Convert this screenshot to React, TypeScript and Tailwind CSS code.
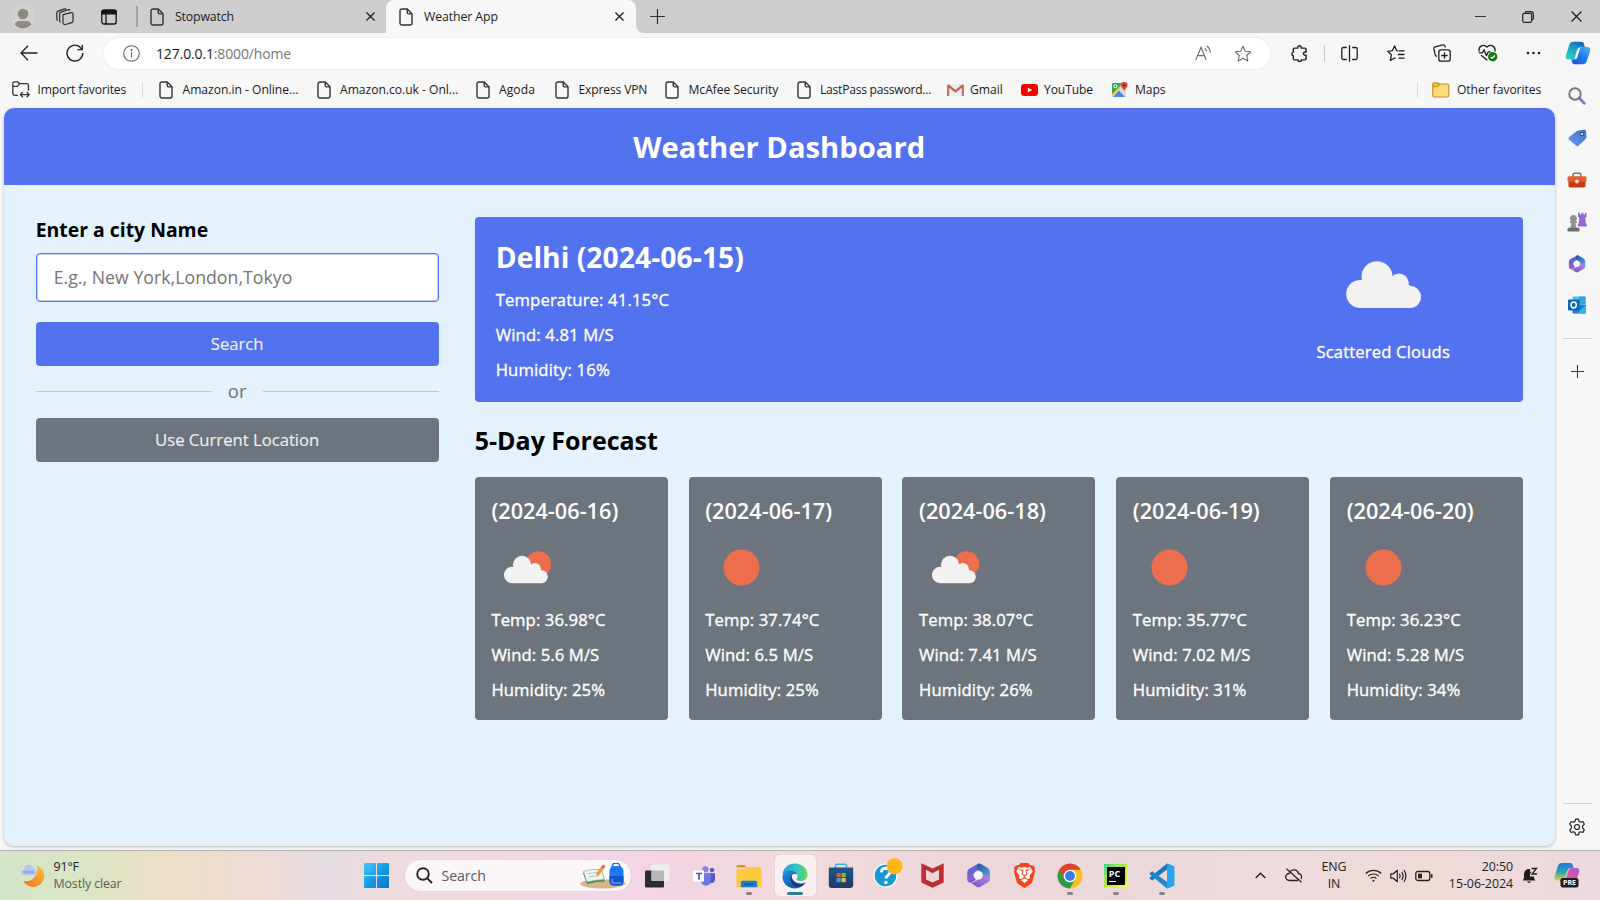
import React from "react";
import { SiBrave } from "react-icons/si";

type P = { className?: string };

/* ---------- browser icons ---------- */
const Doc = ({ className = "" }: P) => (
  <svg className={className} width="14" height="18" viewBox="0 0 14 18" fill="none" stroke="#333" strokeWidth="1.4">
    <path d="M3 1h5.2L13 5.8V15a2 2 0 0 1-2 2H3a2 2 0 0 1-2-2V3a2 2 0 0 1 2-2Z" />
    <path d="M8.2 1v3.6c0 .8.5 1.3 1.3 1.3H13" />
  </svg>
);
const Cross = ({ s = 9, w = 1.4 }: { s?: number; w?: number }) => (
  <svg width={s} height={s} viewBox="0 0 10 10" stroke="#1b1b1b" strokeWidth={w} fill="none">
    <path d="M.5.5l9 9M9.5.5l-9 9" />
  </svg>
);
const Plus = ({ s = 15 }: { s?: number }) => (
  <svg width={s} height={s} viewBox="0 0 15 15" stroke="#333" strokeWidth="1.2" fill="none">
    <path d="M7.5 0v15M0 7.5h15" />
  </svg>
);
const Avatar = () => (
  <svg width="24" height="24" viewBox="0 0 24 24">
    <circle cx="12" cy="12" r="11.6" fill="#d5d2ce" />
    <circle cx="12" cy="9" r="5.3" fill="#8d8985" />
    <path d="M3.8 19.6C4.4 16.8 6.4 16 8.500 16h7c2.100 0 4.100.8 4.700 3.600A11.300 11.300 0 0 1 12 23.300a11.300 11.300 0 0 1-8.200-3.700Z" fill="#8d8985" />
  </svg>
);
const Workspaces = () => (
  <svg width="18" height="18" viewBox="0 0 18 18" fill="none" stroke="#2b2b2b" strokeWidth="1.200" strokeLinejoin="round">
    <path d="M7 6.600l8-2c1-.2 2 .4 2 1.400v7c0 .8-.5 1.400-1.200 1.600l-6.300 1.900C8.200 16.900 7 16.200 7 15V6.600Z" />
    <path d="M4.600 14.200c-.7-.1-1-.7-1-1.400V6c0-1 .5-1.600 1.300-1.900l7.300-2.400c.7-.2 1.500 0 1.800.8" />
    <path d="M1.900 12.300c-.7-.1-1.100-.7-1.100-1.400V5c0-1 .5-1.600 1.300-1.900L8.500.9c.8-.3 1.500 0 1.800.7" />
  </svg>
);
const TabActions = () => (
  <svg width="16" height="16" viewBox="0 0 16 16" fill="none" stroke="#111" strokeWidth="1.300">
    <rect x=".8" y="1" width="14.400" height="14" rx="2.200" />
    <path d="M1 1.800h14v3H1z" fill="#111" />
    <path d="M5 5v10" />
  </svg>
);
const Back = () => (
  <svg width="18" height="16" viewBox="0 0 18 16" fill="none" stroke="#222" strokeWidth="1.300">
    <path d="M8 .8L1 8l7 7.200M1 8h16.500" />
  </svg>
);
const Refresh = () => (
  <svg width="18" height="18" viewBox="0 0 18 18" fill="none" stroke="#222" strokeWidth="1.400">
    <path d="M16.800 9A7.900 7.900 0 1 1 13.800 2.900L16 5.400" />
    <path d="M16.300.8v4.800h-4.800" />
  </svg>
);
const Info = () => (
  <svg width="17" height="17" viewBox="0 0 17 17" fill="none" stroke="#666" strokeWidth="1.100">
    <circle cx="8.500" cy="8.500" r="7.800" />
    <path d="M8.500 7.300v5" />
    <circle cx="8.500" cy="5.100" r=".5" fill="#666" />
  </svg>
);
const ReadAloud = () => (
  <svg width="17" height="16" viewBox="0 0 17 16" fill="none" stroke="#6b6b6b" strokeWidth="1.100">
    <path d="M.8 15L6 2.300 11.200 15M2.600 10.600h6.800" />
    <path d="M9.800 3.200c1 .8 1.500 1.900 1.600 3.200M11.800 1c2.200 1.500 3.400 4 3.500 6.800" />
  </svg>
);
const starPath = "M9 1.200l2.300 5 5.400.6-4 3.700 1.100 5.400L9 13.200l-4.800 2.700 1.100-5.400-4-3.700 5.400-.6L9 1.200Z";
const Star = () => (
  <svg width="18" height="17" viewBox="0 0 18 17" fill="none" stroke="#6b6b6b" strokeWidth="1.100" strokeLinejoin="round">
    <path d={starPath} />
  </svg>
);
const Puzzle = () => (
  <svg width="17" height="17" viewBox="0 0 17 17" fill="none" stroke="#1f1f1f" strokeWidth="1.400" strokeLinejoin="round">
    <path d="M3.300 3.200H6.600C6.200 1.800 7 .8 8.200.8s2 1 1.600 2.400h3.600c.8 0 1.400.5 1.400 1.300v2.700c-1.500-.4-2.700.4-2.700 1.500s1.200 2 2.700 1.500v3.400c0 .8-.6 1.400-1.400 1.400H10c.3 1-.6 1.700-1.600 1.700S6.500 16 6.800 15H3.300c-.8 0-1.300-.6-1.300-1.400v-2.800C.9 10.700.7 9.700.7 9s.4-1.700 1.300-1.800V4.500c0-.8.500-1.300 1.300-1.300Z" transform="translate(.3 -.1)" />
  </svg>
);
const Split = () => (
  <svg width="17" height="17" viewBox="0 0 17 17" fill="none" stroke="#1f1f1f" strokeWidth="1.300">
    <path d="M5.800 2.500H2.500C1.500 2.500.8 3 .8 4v9c0 1 .7 1.500 1.700 1.500h3.300M11.200 2.500h3.300c1 0 1.700.5 1.700 1.500v9c0 1-.7 1.500-1.700 1.500h-3.300M8.500.3v16.400" />
  </svg>
);
const FavList = () => (
  <svg width="18" height="17" viewBox="0 0 18 17" fill="none" stroke="#1f1f1f" strokeWidth="1.300" strokeLinejoin="round">
    <path d="M11 5.800L9.700 5.600 7.600.9 5.500 5.600.8 6.300l3.500 3.500-.9 5.600L7.600 13l1.100.5M11.600 5.800h5.900M10.800 9.500h6.700M11.600 13.200h5.900" />
  </svg>
);
const Collections = () => (
  <svg width="18" height="18" viewBox="0 0 18 18" fill="none" stroke="#1f1f1f" strokeWidth="1.300" strokeLinejoin="round">
    <rect x="5.800" y="5.800" width="11.400" height="11.400" rx="2.200" />
    <path d="M11.500 8.300v6.400M8.300 11.500h6.400" />
    <path d="M3.800 12.300c-.9-.1-1.300-.8-1.600-1.600L.9 5c-.2-1 .3-1.900 1.300-2.200L9.800.9c1-.2 1.900.3 2.200 1.200l.4 1.400" />
  </svg>
);
const Heart = () => (
  <svg width="20" height="18" viewBox="0 0 20 18" fill="none" stroke="#1f1f1f" strokeWidth="1.300" strokeLinejoin="round">
    <path d="M16.900 7.500c.5-2.400-.5-5-3-5.900C12 .9 10.300 1.600 9 3.200 7.700 1.600 6 .9 4.100 1.600 1.600 2.500.6 5.100 1.200 7.600M3 11.200l6.300 5" />
    <path d="M.8 8.800h3.600L6 5.700l2.400 6 1.800-3.800h2.400" />
    <circle cx="14.700" cy="12.800" r="4.700" fill="#117b12" stroke="none" />
    <path d="M12.600 12.900l1.500 1.500 2.800-2.900" stroke="#fff" />
  </svg>
);
const Dots = () => (
  <svg width="15" height="4" viewBox="0 0 15 4" fill="#222">
    <circle cx="2" cy="2" r="1.300" /><circle cx="7.500" cy="2" r="1.300" /><circle cx="13" cy="2" r="1.300" />
  </svg>
);
const Copilot = () => (
  <svg width="26" height="24" viewBox="0 0 26 24">
    <defs>
      <linearGradient id="cpA" x1=".7" y1="0" x2=".2" y2="1"><stop offset="0" stopColor="#1565b8" /><stop offset=".45" stopColor="#1aa7c4" /><stop offset="1" stopColor="#35d0c8" /></linearGradient>
      <linearGradient id="cpB" x1="1" y1="0" x2="0" y2="1"><stop offset="0" stopColor="#4bb7f4" /><stop offset=".5" stopColor="#1c7be8" /><stop offset="1" stopColor="#1f4fd0" /></linearGradient>
    </defs>
    <path d="M8.500.8H16c1.600 0 2.600.8 3 2.300l.8 3H17c-2 0-3.200 1-3.800 2.900l-2.300 7.300c-.5 1.500-1.500 2.300-3 2.300H3.500C1.200 18.600.2 17 .9 14.500L4.200 4C4.900 1.900 6.300.8 8.500.8Z" fill="url(#cpA)" />
    <path d="M17.500 23.200H10c-1.600 0-2.600-.8-3-2.300l-.7-2.300h2.500c1.700 0 2.800-1 3.300-2.700L14.400 8.500c.5-1.600 1.600-2.400 3.300-2.400h4.800c2.300 0 3.300 1.700 2.600 4.100L21.800 20c-.7 2.200-2.100 3.200-4.300 3.200Z" fill="url(#cpB)" />
    <path d="M14.500 7c-1.200 2.700-2.200 7.600-3.600 10.300.3-3 .7-7.300 3.600-10.300Z" fill="#fff" stroke="#fff" strokeWidth="1.600" />
  </svg>
);
const ImportFolder = () => (
  <svg width="18" height="17" viewBox="0 0 18 17" fill="none" stroke="#333" strokeWidth="1.300" strokeLinejoin="round">
    <path d="M6 14.300H2.500C1.500 14.300.8 13.600.8 12.600V2.400C.8 1.400 1.500.8 2.500.8h3.200L7.600 2.700h7.200c1 0 1.700.7 1.700 1.700v5.300M.8 5.400h4.600L7.600 2.700" />
    <path d="M8.500 13.600h8.500M10.800 11l-2.500 2.600 2.500 2.600M14.700 11l2.500 2.600-2.500 2.600" />
  </svg>
);
const Gmail = () => (
  <svg width="17" height="12" viewBox="0 0 17 12">
    <path d="M1 0h15v12H1z" fill="#f1eeee" />
    <path d="M0 12V1.200L2.300.8V12zM17 12V1.200L14.700.8V12z" fill="#c9756c" />
    <path d="M.8 1.200L8.500 7.300l7.700-6.100" fill="none" stroke="#cf5a4f" strokeWidth="2.200" />
  </svg>
);
const YouTube = () => (
  <svg width="17" height="12" viewBox="0 0 17 12"><rect width="17" height="12" rx="3" fill="#f60000" /><path d="M6.800 3.500v5l4.300-2.500z" fill="#fff" /></svg>
);
const Maps = () => (
  <svg width="16" height="15" viewBox="0 0 16 15">
    <rect y="1" width="14" height="14" rx="1.500" fill="#d8dce0" />
    <path d="M0 2.500C0 1.500.6 1 1.500 1H9L7.500 7 0 14z" fill="#37a35c" />
    <path d="M1 15l6-6.500 6 6.500z" fill="#4a86e8" />
    <path d="M0 13.500L9.500 3.800" stroke="#f6ce46" strokeWidth="1.800" />
    <circle cx="3.400" cy="4.200" r="1.600" fill="none" stroke="#fff" />
    <path d="M12.200 0a3.300 3.300 0 0 1 3.400 3.300c0 2.500-2.700 3-3.400 6.200-.7-3.200-3.400-3.700-3.400-6.200A3.300 3.300 0 0 1 12.200 0Z" fill="#d9483b" />
    <circle cx="12.200" cy="3.300" r="1.200" fill="#8a211c" />
  </svg>
);
const Folder = () => (
  <svg width="18" height="16" viewBox="0 0 18 16" fill="#fdd978" stroke="#c2902a" strokeWidth="1.100">
    <rect x=".8" y="2" width="16" height="13" rx="1.600" />
    <path d="M.8 5V2.300C.8 1.300 1.400.8 2.300.8h3.500L7.600 2.500 5.400 4.800H.8" fill="#f2bd3b" />
  </svg>
);

/* ---------- sidebar icons ---------- */
const SideSearch = () => (
  <svg width="18" height="18" viewBox="0 0 18 18" fill="none">
    <path d="M11.300 11.300l5 4.900" stroke="#9a6bd0" strokeWidth="2.800" strokeLinecap="round" />
    <circle cx="7" cy="7" r="5.700" stroke="#767676" strokeWidth="1.900" fill="#f3f6f8" />
  </svg>
);
const Tag = () => (
  <svg width="19" height="18" viewBox="0 0 19 18">
    <defs><linearGradient id="tg" x1="1" y1="0" x2="0" y2="1"><stop offset="0" stopColor="#3f74cf" /><stop offset="1" stopColor="#6a9df0" /></linearGradient></defs>
    <path d="M10.500 1.500l5.800-.7c1-.1 1.700.5 1.800 1.500l.3 5.700c0 .8-.2 1.300-.8 1.900l-6.800 6.600c-.9.900-2 .8-2.900-.1L1 10.800c-.8-.9-.7-1.900.2-2.700L8.600 2.200c.6-.5 1.100-.6 1.900-.7Z" fill="url(#tg)" />
    <circle cx="13.900" cy="5" r="1.700" fill="#eef" stroke="#254a8c" strokeWidth="1.100" />
  </svg>
);
const Toolbox = () => (
  <svg width="20" height="16" viewBox="0 0 20 16">
    <path d="M6 5V3c0-1.200.6-1.800 1.800-1.800h4.400C13.400 1.200 14 1.800 14 3v2" fill="none" stroke="#777" strokeWidth="1.500" />
    <path d="M1.500 9h17v4.800c0 1-.7 1.700-1.700 1.700H3.200c-1 0-1.700-.7-1.700-1.700z" fill="#c93a12" />
    <rect x=".5" y="4.300" width="19" height="5.500" rx="1.500" fill="#e2602e" />
    <circle cx="10" cy="9.500" r="1.900" fill="#f2dfd6" />
  </svg>
);
const Chess = () => (
  <svg width="20" height="20" viewBox="0 0 20 20">
    <path d="M11 .8h1.800v1.700h1.600V.8h2v1.700H18V.8h1.600v4l-1.300 1.300.5 5 1 1.400v2h-9v-2l1-1.400.5-5L11 4.800z" fill="#9a68d3" />
    <path d="M2 17c0-1 .8-1.300 1.600-1.600L4.300 11H3V9.200h1.200A3.500 3.500 0 1 1 8.600 9.200H10V11H8.500l.7 4.400c.8.300 1.600.6 1.600 1.600z" fill="#929292" />
    <rect x=".5" y="15.800" width="12" height="3.700" rx="1.300" fill="#6c6c6c" />
  </svg>
);
const M365 = ({ s = 18 }: { s?: number }) => {
  const id = "m" + s;
  return (
    <svg width={s} height={s} viewBox="0 0 24 24">
      <defs>
        <linearGradient id={id + "a"} x1="0" y1="0" x2="0" y2="1"><stop offset="0" stopColor="#5965d8" /><stop offset="1" stopColor="#8a5ad8" /></linearGradient>
        <linearGradient id={id + "b"} x1="0" y1="0" x2="1" y2="1"><stop offset="0" stopColor="#2b4c9c" /><stop offset="1" stopColor="#4fb6ea" /></linearGradient>
        <linearGradient id={id + "c"} x1="0" y1="1" x2="1" y2="0"><stop offset="0" stopColor="#6d53c0" /><stop offset="1" stopColor="#c58be0" /></linearGradient>
      </defs>
      <path d="M12 .5L3.500 5.200C2 6 1.200 7.200 1.200 9v6.500c0 2.500 2 4 4.300 3.200l4-2.400-2-3c-.8-1.500-.6-3.400 1-4.500L14 5z" fill={"url(#" + id + "a)"} />
      <path d="M11.500.8c1-.5 2-.4 3 .2l6.300 3.800C22.200 5.700 22.900 7 22.900 8.600V17L16 14.500c1.500-2 .7-4.800-1.500-6L10 6z" fill={"url(#" + id + "b)"} />
      <path d="M4.500 19c1.500.3 2.500-.3 4-1.200l6-3.600c1.600-1 2-3 1-4.700l6 3.600c1.600 1 2 3.400.4 5l-8 4.700c-1.200.7-2.500.7-3.700 0z" fill={"url(#" + id + "c)"} />
      <circle cx="12" cy="12" r="3.900" fill="#f7f7fa" />
    </svg>
  );
};
const Outlook = () => (
  <svg width="18" height="18" viewBox="0 0 18 18">
    <rect x="4.500" y=".5" width="13" height="12" rx="1" fill="#4cc2ee" />
    <path d="M11 .5h5.500a1 1 0 0 1 1 1V8H11z" fill="#34a3e2" />
    <path d="M4.500 8.500L18 9v7.700c0 .5-.4.800-.9.800H5.400c-.5 0-.9-.3-.9-.8z" fill="#1a83d0" />
    <path d="M18 9l-9 8.500h8c.6 0 1-.4 1-1z" fill="#35b4ef" />
    <rect y="3.500" width="11.500" height="11" rx="1.100" fill="#0f66b4" />
    <ellipse cx="5.700" cy="9" rx="2.600" ry="2.900" fill="none" stroke="#fff" strokeWidth="1.500" />
  </svg>
);
const Gear = () => (
  <svg width="18" height="18" viewBox="0 0 18 18" fill="none" stroke="#222" strokeWidth="1.200" strokeLinejoin="round">
    <path d="M7.500 1.100h3l.5 2.300 1.500.9 2.300-.8 1.500 2.600-1.700 1.700v2.400l1.700 1.700-1.500 2.600-2.300-.8-1.500.9-.5 2.300h-3L7 14.600l-1.500-.9-2.300.8-1.500-2.600 1.700-1.700V7.800L1.700 6.100l1.500-2.600 2.300.8L7 3.400z" />
    <circle cx="9" cy="9" r="2.500" />
  </svg>
);

/* ---------- weather drawings ---------- */
const cloudShape = (
  <g fill="#f2f2f2">
    <circle cx="31" cy="15.800" r="15.500" /><circle cx="14.200" cy="33" r="14" /><circle cx="53" cy="22" r="9.500" />
    <circle cx="64" cy="36" r="11" /><rect x="14" y="24" width="50" height="23" /><rect x="50" y="20" width="12.500" height="14" />
  </g>
);
const BigCloud = () => <svg width="125" height="125" viewBox="-25 -38 125 125">{cloudShape}</svg>;
const DayIcon = ({ cloudy }: { cloudy: boolean }) => (
  <svg className="mt-[5.2px] block shrink-0" width="73" height="73" viewBox="0 0 73 73">
    {cloudy ? (
      <>
        <circle cx="47.500" cy="33" r="12.700" fill="#ec6e4c" />
        <g transform="translate(12.800 24.600) scale(.588)">{cloudShape}</g>
      </>
    ) : <circle cx="36.500" cy="36.500" r="18" fill="#ec6e4c" />}
  </svg>
);

/* ---------- taskbar icons ---------- */
const MoonCloud = () => (
  <svg width="24" height="24" viewBox="0 0 24 24">
    <defs><linearGradient id="mn" x1="1" y1="0" x2=".3" y2="1"><stop offset="0" stopColor="#fbc545" /><stop offset="1" stopColor="#ee7d1c" /></linearGradient></defs>
    <path d="M15.800 1.500A11 11 0 1 1 2.200 16.500c8 2.700 15.800-5 13.600-15Z" fill="url(#mn)" />
    <path d="M3.500 11.200C1.500 11.200.3 9.900.3 8.400s1.200-2.700 2.900-2.700C3.500 2.400 5.300.7 7.800.7s4 1.500 4.400 3.700c2-.1 3.300 1.300 3.300 3.300s-1.400 3.500-3.500 3.500z" fill="#b4c6f2" />
    <path d="M3 8h9" stroke="#8fa9e6" strokeWidth="2.500" strokeLinecap="round" />
  </svg>
);
const Start = () => (
  <svg width="25" height="25" viewBox="0 0 25 25">
    <defs><linearGradient id="st" gradientUnits="userSpaceOnUse" x1="0" y1="0" x2="25" y2="25"><stop offset="0" stopColor="#41caf8" /><stop offset=".5" stopColor="#199be8" /><stop offset="1" stopColor="#0a6fd0" /></linearGradient></defs>
    <g fill="url(#st)"><rect width="12" height="12" rx="1" /><rect x="13" width="12" height="12" rx="1" /><rect y="13" width="12" height="12" rx="1" /><rect x="13" y="13" width="12" height="12" rx="1" /></g>
  </svg>
);
const SchoolArt = () => (
  <svg width="48" height="26" viewBox="0 0 48 26">
    <path d="M1 21c3-5 16-5 24-4 8-1.500 18-.5 22 3.500-2 3-12 5-23 5S3 24 1 21Z" fill="#d8b48c" />
    <path d="M4 10l10-2.500 9 .500 3 10.500-8 .500L8 21z" fill="#3f8f5a" />
    <path d="M4.500 8.500l9-2 9 0 2.800 10-9 .8L8 19z" fill="#f4f6f2" stroke="#7fb08c" strokeWidth=".7" />
    <path d="M8 11l11-2M9 14l11-1.500" stroke="#9bb" strokeWidth=".8" />
    <path d="M24.500 3.500L18 12" stroke="#f0962e" strokeWidth="3" />
    <path d="M23.400 4.800l1.900-2.500" stroke="#e8606a" strokeWidth="3" />
    <path d="M33 4a4 4 0 0 1 8 0" fill="none" stroke="#1558c9" strokeWidth="1.300" />
    <rect x="30.500" y="3" width="14" height="19.500" rx="5" fill="#1f78f0" />
    <path d="M30.500 13h14v6c0 2-1.300 3.500-3.500 3.500h-7c-2.200 0-3.500-1.500-3.500-3.500z" fill="#1455cf" />
    <path d="M33 16v4h9.500" stroke="#6fc0ff" strokeWidth="1" fill="none" />
  </svg>
);
const TaskView = () => (
  <svg width="25" height="24" viewBox="0 0 25 24">
    <rect y="6.500" width="19" height="17" rx="1" fill="#2c2c2c" />
    <rect x="6.500" y=".5" width="18" height="16.500" rx="1" fill="#f0eded" />
    <path d="M6.500 6.500H19V17H6.500z" fill="#b9b7b7" />
  </svg>
);
const Teams = () => (
  <svg width="24" height="20" viewBox="0 0 24 20">
    <circle cx="13.500" cy="3.300" r="3.100" fill="#7b83eb" /><circle cx="20" cy="4" r="2.200" fill="#5059c9" />
    <path d="M15 7.300h8v6a4 4 0 0 1-5 3.800z" fill="#5059c9" />
    <path d="M9 7.300h10V14c0 3.300-2 5.500-5 5.500S9 17.300 9 14z" fill="#6f77e0" />
    <rect x="1" y="4.500" width="11" height="11" fill="#fff" />
    <path d="M4 7.500h6M7 7.500v6.300" stroke="#4b53bc" strokeWidth="1.700" />
  </svg>
);
const Explorer = () => (
  <svg width="26" height="24" viewBox="0 0 26 24">
    <path d="M.5 2.500C.5 1.500 1 1 2 1h6.500l2.500 2.500H.5z" fill="#d99a12" />
    <path d="M.5 5h8.500L11 3h13c1 0 1.500.6 1.500 1.500V22c0 .8-.5 1.300-1.300 1.300H1.800C1 23.300.5 22.800.5 22z" fill="#fdc93c" />
    <path d="M4.800 23.300v-4.500c0-1.200.7-2 2-2h12.400c1.300 0 2 .8 2 2v4.500z" fill="#1480cf" />
    <rect x="8.500" y="19.600" width="9" height="1.500" rx=".6" fill="#0c5ba0" />
  </svg>
);
const Edge = () => (
  <svg width="26" height="26" viewBox="0 0 26 26">
    <defs>
      <linearGradient id="ea" x1="0" y1=".4" x2="1" y2=".4"><stop offset="0" stopColor="#1f9fdc" /><stop offset=".55" stopColor="#2fc3c8" /><stop offset="1" stopColor="#66d94f" /></linearGradient>
      <linearGradient id="eb" x1="0" y1="0" x2=".6" y2="1"><stop offset="0" stopColor="#1d8fe0" /><stop offset="1" stopColor="#0e5cb4" /></linearGradient>
    </defs>
    <path d="M.5 12C1 5 6.200.5 13 .5c7.500 0 12.500 5.500 12.500 11 0 4-3 6.500-6.500 6.500-3 0-4.600-1-4.600-2 0-.8 1.300-1.300 1.300-3.500 0-2.500-2.700-4.500-6-4.500C5 8 1.500 9.500.5 12Z" fill="url(#ea)" />
    <path d="M.5 13.500C1 9.500 4.500 7.500 8.500 7.500c3.500 0 6.500 1.700 7 4.500-.8-.8-1.800-1-2.800-1-2.700 0-4.700 2.300-4.700 5.200 0 4 3.400 7.800 8.500 8.500-1 .5-2.500.8-3.500.8C6 25.500.2 20 .5 13.500Z" fill="url(#eb)" />
    <path d="M8 16c0-1.700.7-3.300 1.900-4.200-.9 5 3.600 8.700 8.600 8.700 2 0 3.700-.5 5.400-1.500-1.700 3-4.400 5-7.400 5.700C11.500 24.500 8 20.500 8 16Z" fill="#123f86" />
  </svg>
);
const Store = () => (
  <svg width="26" height="26" viewBox="0 0 26 26">
    <defs><linearGradient id="sr" x1="0" y1="0" x2="0" y2="1"><stop offset="0" stopColor="#1c568f" /><stop offset="1" stopColor="#213a60" /></linearGradient></defs>
    <path d="M7.500 5V2.700c0-1 .5-1.500 1.500-1.500h8c1 0 1.500.5 1.500 1.500V5" fill="none" stroke="#3db1e8" strokeWidth="1.600" />
    <path d="M.8 4.500h24.400V22c0 2-1 3-3 3H3.800c-2 0-3-1-3-3z" fill="url(#sr)" />
    <path d="M8.500 10h4.200v4.200H8.500z" fill="#e65330" /><path d="M13.500 10h4.200v4.200h-4.200z" fill="#80b93c" />
    <path d="M8.500 15h4.200v4.200H8.500z" fill="#31a0e2" /><path d="M13.500 15h4.200v4.200h-4.200z" fill="#f3b92a" />
  </svg>
);
const Help = () => (
  <svg width="30" height="30" viewBox="0 0 30 30">
    <circle cx="12.500" cy="17.500" r="12" fill="#fff" /><circle cx="12.500" cy="17.500" r="10.800" fill="#1699d2" />
    <path d="M8.300 14.300c.3-2.700 2-4 4.400-4 2.500 0 4.300 1.400 4.300 3.600 0 3.100-4 3.200-4 6.600" fill="none" stroke="#fff" strokeWidth="2.900" />
    <circle cx="12.900" cy="24.500" r="1.800" fill="#fff" /><circle cx="21.600" cy="8.300" r="8.100" fill="#fdb714" />
  </svg>
);
const McAfee = () => (
  <svg width="23" height="25" viewBox="0 0 23 25"><path d="M.3.3l11.200 5.200L22.700.3v19.200l-11.200 5.200L.3 19.500zM5 6.800v9.600l6.500 3.200 6.500-3.200V6.800l-6.500 3.500z" fill="#bd2f33" fillRule="evenodd" /></svg>
);
const Chrome = () => (
  <svg width="26" height="26" viewBox="0 0 26 26">
    <circle cx="13" cy="13" r="12.500" fill="#fbc11d" />
    <path d="M2.200 6.700L7.600 16 13 13V6.800h10.800A12.500 12.500 0 0 0 2.200 6.700Z" fill="#dd4132" />
    <path d="M2.200 6.700L7.600 16.100 13 19.300l5.400-3.100L12.900 25.500A12.500 12.500 0 0 1 2.200 6.700Z" fill="#2c9c4b" />
    <circle cx="13" cy="13" r="6.300" fill="#fff" /><circle cx="13" cy="13" r="4.900" fill="#3d7de8" />
  </svg>
);
const PyCharm = () => (
  <div className="flex h-[23px] w-[23px] items-center justify-center bg-linear-to-br from-[#21d789] via-[#b4e930] to-[#fcf84a]">
    <div className="flex h-[18px] w-[18px] flex-col bg-black pl-[2px] pt-[2px]">
      <span className="font-['Open_Sans',sans-serif] text-[9px] font-bold leading-[9px] text-white">PC</span>
      <span className="mt-[3px] h-[1.500px] w-[7px] bg-white" />
    </div>
  </div>
);
const VSCode = () => (
  <svg width="26" height="26" viewBox="0 0 26 26">
    <path d="M18 6.500L3.200 17.500 1 16l-.5-1.200L18 .6z" fill="#1878bd" />
    <path d="M18.500 19.200L3.200 8.200 1 9.700.5 11 18 25.400z" fill="#1c86cd" />
    <path d="M18 .6l1.500.1 5 2.400c.7.300 1 .8 1 1.500v16.800c0 .7-.3 1.200-1 1.500l-5 2.400-1.500.1z" fill="#2aa4ec" />
  </svg>
);
const Wifi = () => (
  <svg width="17" height="13" viewBox="0 0 17 13" fill="none" stroke="#222" strokeWidth="1.200">
    <path d="M.8 4.500a11 11 0 0 1 15.400 0M3.200 7.200a7.500 7.500 0 0 1 10.600 0M5.600 9.600a4.200 4.200 0 0 1 5.800 0" /><circle cx="8.500" cy="11.700" r="1" fill="#222" stroke="none" />
  </svg>
);
const Volume = () => (
  <svg width="17" height="14" viewBox="0 0 17 14" fill="none" stroke="#222" strokeWidth="1.200" strokeLinejoin="round">
    <path d="M.8 4.800h2.500L7.300 1.200v11.600L3.300 9.200H.8zM9.500 4.800c.8 1.300.8 3.100 0 4.400M11.800 3c1.600 2.300 1.600 5.700 0 8M14 1.200c2.500 3.300 2.500 8.300 0 11.600" />
  </svg>
);
const Battery = () => (
  <svg width="18" height="12" viewBox="0 0 18 12" fill="none" stroke="#222" strokeWidth="1.300">
    <rect x=".8" y="1.500" width="14" height="9" rx="2" /><path d="M16.700 4.200v3.600" strokeWidth="1.600" /><rect x="3" y="3.700" width="4" height="4.600" fill="#222" stroke="none" />
  </svg>
);
const CloudOff = () => (
  <svg width="18" height="15" viewBox="0 0 18 15" fill="none" stroke="#222" strokeWidth="1.300">
    <path d="M5.200 3.500A4.700 4.700 0 0 1 13.400 5.500 3.600 3.600 0 0 1 16 11.200M13 12.500H4.300a3.500 3.500 0 0 1-.2-7L4.500 4.500M1.500.8l15 13.500" />
  </svg>
);
const Bell = () => (
  <svg width="16" height="17" viewBox="0 0 16 17">
    <path d="M7 2a5 5 0 0 0-5 5v4L.7 13.500h12.600L12 11V9.500H8V7l1.500-2.300H8V2z" fill="#1c1c1c" /><path d="M5 14.500a2.100 2.100 0 0 0 4 0z" fill="#1c1c1c" />
    <path d="M9.500 1.500h5L10 7h5" fill="none" stroke="#1c1c1c" strokeWidth="1.300" />
  </svg>
);
const CopilotPre = () => (
  <svg width="26" height="27" viewBox="0 0 26 27">
    <defs>
      <linearGradient id="pa" x1="0" y1="0" x2="0" y2="1"><stop offset="0" stopColor="#2870dd" /><stop offset=".5" stopColor="#26a7b0" /><stop offset="1" stopColor="#e8cf34" /></linearGradient>
      <linearGradient id="pb" x1="1" y1="0" x2="0" y2="1"><stop offset="0" stopColor="#a552e0" /><stop offset=".6" stopColor="#ed5a8a" /><stop offset="1" stopColor="#f8923a" /></linearGradient>
    </defs>
    <path d="M8 1h8c1.500 0 2.300.8 2.800 2.200l.8 2.800H17c-2 0-3.100 1-3.700 2.900L11 16c-.5 1.700-1.500 2.500-3.200 2.500H3.300C1 18.500 0 17 .7 14.500L3.800 4C4.500 2 5.800 1 8 1Z" fill="url(#pa)" />
    <path d="M17.500 23h-8C8 23 7 22.200 6.700 20.700l-.5-2.200H9c1.700 0 2.600-1 3.100-2.700l2.300-7.300c.5-1.600 1.600-2.500 3.300-2.500h4.800c2.200 0 3.300 1.600 2.600 4L22 19.800c-.8 2.200-2.200 3.200-4.500 3.200Z" fill="url(#pb)" />
    <rect x="6.500" y="16" width="18" height="9.500" rx="2.200" fill="#1e1e1e" />
    <text x="15.500" y="23.400" textAnchor="middle" fontFamily="Open Sans, sans-serif" fontSize="7" fontWeight="700" fill="#fff">PRE</text>
  </svg>
);

/* ---------- data ---------- */
const bookmarks: { icon: React.ReactNode; label: string; item: string; track: string }[] = [
  { icon: <Doc />, label: "Amazon.in - Online...", item: "w-[157.500px]", track: "tracking-[-0.02px]" },
  { icon: <Doc />, label: "Amazon.co.uk - Onl...", item: "w-[159px]", track: "tracking-[-0.02px]" },
  { icon: <Doc />, label: "Agoda", item: "w-[79.500px]", track: "tracking-[0.06px]" },
  { icon: <Doc />, label: "Express VPN", item: "w-[110px]", track: "tracking-[-0.15px]" },
  { icon: <Doc />, label: "McAfee Security", item: "w-[131.500px]", track: "tracking-[-0.02px]" },
  { icon: <Doc />, label: "LastPass password...", item: "w-[150px]", track: "tracking-[-0.24px]" },
  { icon: <Gmail />, label: "Gmail", item: "w-[74px]", track: "tracking-[0px]" },
  { icon: <YouTube />, label: "YouTube", item: "w-[91px]", track: "tracking-[-0.1px]" },
  { icon: <Maps />, label: "Maps", item: "w-[60px]", track: "tracking-[-0.1px]" },
];
const days = [
  { date: "(2024-06-16)", cloudy: true, t: "36.98", w: "5.6", h: "25" },
  { date: "(2024-06-17)", cloudy: false, t: "37.74", w: "6.5", h: "25" },
  { date: "(2024-06-18)", cloudy: true, t: "38.07", w: "7.41", h: "26" },
  { date: "(2024-06-19)", cloudy: false, t: "35.77", w: "7.02", h: "31" },
  { date: "(2024-06-20)", cloudy: false, t: "36.23", w: "5.28", h: "34" },
];
const apps: { icon: React.ReactNode; run?: boolean; active?: boolean }[] = [
  { icon: <TaskView /> }, { icon: <Teams /> }, { icon: <Explorer />, run: true }, { icon: <Edge />, active: true },
  { icon: <Store /> }, { icon: <div className="-mt-[5px] ml-[3px]"><Help /></div> }, { icon: <McAfee /> }, { icon: <M365 s={25} /> },
  {
    icon: (
      <div className="flex h-[26px] w-[26px] items-center justify-center bg-[radial-gradient(circle,#fff_0_8px,transparent_8.5px)]">
        <SiBrave size={25} color="#f4451f" />
      </div>
    ),
  },
  { icon: <Chrome />, run: true }, { icon: <PyCharm />, run: true }, { icon: <VSCode />, run: true },
];

const Slot = ({ w, children }: { w: string; children: React.ReactNode }) => (
  <div className={"flex shrink-0 items-center justify-center " + w}>{children}</div>
);

function TabStrip() {
  return (
    <div className="flex h-[33px] shrink-0 bg-[#cdcdcd] text-[12.300px]">
      <Slot w="w-[46px]"><Avatar /></Slot>
      <Slot w="w-[37px]"><Workspaces /></Slot>
      <Slot w="w-[51px]"><TabActions /></Slot>
      <div className="mt-[6px] ml-[2px] h-[21px] w-[2px] bg-[#a3a3a3]" />
      <div className="flex w-[248px] items-center rounded-br-lg pl-[12px]">
        <Doc />
        <span className="ml-[11px] flex-1 pt-[2px] tracking-[-0.15px]">Stopwatch</span>
        <span className="mr-[11px]"><Cross /></span>
      </div>
      <div className="flex bg-[#f7f7f7]">
        <div className="w-[6px] rounded-br-lg bg-[#cdcdcd]" />
      </div>
      <div className="-ml-[6px] flex w-[250px] items-center rounded-t-lg bg-[#f7f7f7] pl-[13px]">
        <Doc />
        <span className="ml-[11px] flex-1 pt-[2px] tracking-[-0.1px]">Weather App</span>
        <span className="mr-[12px]"><Cross /></span>
      </div>
      <div className="flex bg-[#f7f7f7]">
        <div className="flex w-[43px] items-center justify-center rounded-bl-lg bg-[#cdcdcd]"><Plus /></div>
      </div>
      <div className="flex-1" />
      <Slot w="w-[48px]"><span className="h-px w-[11px] bg-[#333]" /></Slot>
      <Slot w="w-[48px]">
        <svg width="12" height="12" viewBox="0 0 12 12" fill="none" stroke="#222" strokeWidth="1.200"><rect x=".7" y="2.300" width="9" height="9" rx="1.500" /><path d="M3 1.800C3.200 1 3.700.7 4.500.7H9c1.500 0 2.300.8 2.300 2.300v4.500c0 .8-.3 1.300-1.100 1.500" /></svg>
      </Slot>
      <Slot w="w-[48px]"><Cross s={11} w={1.1} /></Slot>
    </div>
  );
}

function Toolbar() {
  return (
    <div className="flex h-[40px] shrink-0 items-center">
      <Slot w="w-[58px]"><Back /></Slot>
      <Slot w="w-[34px]"><Refresh /></Slot>
      <div className="ml-[12px] flex h-[31px] w-[1166px] items-center rounded-full bg-white pl-[19px] shadow-[0_0_3px_rgba(0,0,0,0.08)]">
        <Info />
        <span className="ml-[16px] flex-1 pt-[1px] text-[14px] tracking-[-0.14px] text-[#1b1b1b]">127.0.0.1<span className="text-[#767676]">:8000/home</span></span>
        <Slot w="w-[40px]"><ReadAloud /></Slot>
        <Slot w="w-[40px]"><Star /></Slot>
        <div className="w-[7px]" />
      </div>
      <Slot w="w-[58px]"><Puzzle /></Slot>
      <div className="-ml-[4px] h-[17px] w-px bg-[#c8c8c8]" />
      <Slot w="w-[48px]"><Split /></Slot>
      <Slot w="w-[46px]"><FavList /></Slot>
      <Slot w="w-[46px]"><Collections /></Slot>
      <Slot w="w-[46px]"><Heart /></Slot>
      <Slot w="w-[44px]"><Dots /></Slot>
      <Slot w="w-[45px]"><Copilot /></Slot>
    </div>
  );
}

function Bookmarks() {
  return (
    <div className="flex h-[35px] items-center pb-[1px] text-[12.100px] whitespace-nowrap">
      <div className="ml-[12px] flex w-[130px] items-center gap-[7.500px] tracking-[-0.12px]"><ImportFolder />Import favorites</div>
      <div className="h-[16px] w-px bg-[#dcdcdc]" />
      <div className="ml-[16px] flex">
        {bookmarks.map((b) => (
          <div key={b.label} className={"flex shrink-0 items-center " + b.item}>
            <span className="flex w-[23.500px] shrink-0 items-center">{b.icon}</span>
            <span className={b.track}>{b.label}</span>
          </div>
        ))}
      </div>
      <div className="flex-1" />
      <div className="h-[16px] w-px bg-[#dcdcdc]" />
      <div className="mr-[15px] ml-[14px] flex w-[108px] items-center gap-[7px] tracking-[-0.05px]"><Folder />Other favorites</div>
    </div>
  );
}

function Dashboard() {
  return (
    <div className="ml-[4px] flex h-[738px] w-[1550.500px] flex-col overflow-hidden rounded-[10px] bg-[#e3f2fd] shadow-[0_1px_3px_rgba(0,0,0,0.25)]">
      <h1 className="flex h-[77px] shrink-0 items-center justify-center bg-[#5372f0] pt-[2px] text-[29.200px] font-bold text-white">Weather Dashboard</h1>
      <div className="flex gap-[36px] pt-[32px] pr-[31.500px] pl-[31.700px]">
        <div className="flex w-[403px] shrink-0 flex-col">
          <h3 className="-mt-[1px] text-[19.400px] leading-[27px] font-bold text-black">Enter a city Name</h3>
          <input className="mt-[10px] h-[48.700px] rounded-[4px] border border-[#5372f0] bg-white px-[17px] text-[17.700px] tracking-[0.03px] shadow-[inset_0_0_0_1px_rgba(83,114,240,0.35)] placeholder:text-[#757575]" placeholder="E.g., New York,London,Tokyo" />
          <button className="mt-[20.500px] h-[43.500px] rounded-[4px] bg-[#5372f0] pb-[1px] text-[16.670px] text-[#efefef] [-webkit-text-stroke:0.15px_#efefef]">Search</button>
          <div className="flex h-[52.500px] items-center gap-[16px]">
            <span className="h-px flex-1 bg-[#bccbd9]" />
            <span className="-mt-[3px] text-[18.500px] text-[#6c757d]">or</span>
            <span className="h-px flex-1 bg-[#bccbd9]" />
          </div>
          <button className="h-[43.500px] rounded-[4px] bg-[#6c757d] text-[16.670px] text-[#efefef] [-webkit-text-stroke:0.15px_#efefef]">Use Current Location</button>
        </div>
        <div className="flex min-w-0 flex-1 flex-col">
          <div className="flex h-[184.500px] justify-between rounded-[4px] bg-[#5372f0] pt-[21px] pl-[21px] text-[16.670px] leading-[22.700px] tracking-[0.14px] text-white">
            <div>
              <h2 className="text-[28.300px] leading-[38.500px] font-bold tracking-[0.03px]">Delhi (2024-06-15)</h2>
              <div className="[-webkit-text-stroke:0.35px_white]">
                <p className="mt-[12.800px]">Temperature: 41.15°C</p>
                <p className="mt-[12.300px]">Wind: 4.81 M/S</p>
                <p className="mt-[12.300px]">Humidity: 16%</p>
              </div>
            </div>
            <div className="mr-[73px] -mt-[15px] flex flex-col items-center">
              <BigCloud />
              <p className="-mt-[7px] [-webkit-text-stroke:0.35px_white]">Scattered Clouds</p>
            </div>
          </div>
          <h2 className="mt-[21.500px] mb-[20px] text-[25px] leading-[34px] font-bold text-black">5-Day Forecast</h2>
          <div className="grid grid-cols-5 gap-[20.800px]">
            {days.map((d) => (
              <div key={d.date} className="h-[243px] rounded-[4px] bg-[#6c757d] pt-[19px] pl-[16.700px] text-[16.670px] leading-[22.700px] tracking-[0.1px] text-white">
                <h3 className="text-[21.700px] leading-[29.500px] font-semibold tracking-normal">{d.date}</h3>
                <DayIcon cloudy={d.cloudy} />
                <div className="[-webkit-text-stroke:0.35px_white]">
                  <p className="mt-[5.500px]">Temp: {d.t}°C</p>
                  <p className="mt-[12.300px]">Wind: {d.w} M/S</p>
                  <p className="mt-[12.300px]">Humidity: {d.h}%</p>
                </div>
              </div>
            ))}
          </div>
        </div>
      </div>
    </div>
  );
}

function Sidebar() {
  const rows = [<SideSearch />, <Tag />, <Toolbox />, <Chess />, <M365 />, <Outlook />];
  return (
    <div className="flex h-[777px] w-[45px] flex-col items-center pr-[1px]">
      <div className="mt-[2.500px] flex w-full flex-col">
        {rows.map((r, i) => <div key={i} className="flex h-[41.800px] items-center justify-center">{r}</div>)}
      </div>
      <div className="mt-[11.500px] h-px w-[29px] bg-[#d0d0d0]" />
      <div className="mt-[26px]"><Plus s={13} /></div>
      <div className="flex-1" />
      <div className="h-px w-[29px] bg-[#d0d0d0]" />
      <div className="mt-[14px] mb-[14px]"><Gear /></div>
    </div>
  );
}

function Taskbar() {
  return (
    <div className="flex h-[50px] shrink-0 items-center border-t border-[#b5b0b0] bg-[linear-gradient(90deg,#d3e6c6_0%,#dce5c3_6%,#ecdfc5_10%,#eedccb_13%,#efdad6_17%,#e2dbe1_20%,#eedbde_24%,#f1dade_31%,#f2d6ea_37%,#f3d4e2_42%,#f2dadc_50%,#efd6d8_58%,#ebd7da_70%,#efdadc_80%,#f0dad8_90%,#ecd9de_100%)] text-[12.400px] text-[#222]">
      <div className="flex w-[353.500px] items-center pl-[21px]">
        <MoonCloud />
        <div className="ml-[8.500px] leading-[16.700px] tracking-[-0.12px]">
          <div>91°F</div>
          <div className="text-[#5c5c58]">Mostly clear</div>
        </div>
      </div>
      <Slot w="w-[46px]"><Start /></Slot>
      <div className="ml-[4px] flex h-[33px] w-[228px] items-center rounded-full border border-[#e6d6da] bg-[#fbf6f8] pl-[11px]">
        <svg width="17" height="17" viewBox="0 0 17 17" fill="none" stroke="#222" strokeWidth="1.900"><circle cx="7" cy="7" r="5.800" /><path d="M11.300 11.300l4.700 4.700" /></svg>
        <span className="ml-[9px] flex-1 text-[14.200px] tracking-[-0.1px] text-[#5d5a5b]">Search</span>
        <span className="mr-[4px]"><SchoolArt /></span>
      </div>
      <div className="ml-[3.500px] flex">
        {apps.map((a, i) => (
          <div key={i} className="flex w-[45.800px] justify-center">
            <div className={"relative flex h-[41px] w-[41px] items-center justify-center rounded-[4px] " + (a.active ? "bg-[#faf0f1] shadow-[0_0_1px_rgba(0,0,0,0.25)]" : "")}>
              {a.icon}
              {a.run && <span className="absolute bottom-[1px] h-[3px] w-[6px] rounded-full bg-[#8b8083]" />}
              {a.active && <span className="absolute bottom-[1px] h-[3px] w-[16px] rounded-full bg-[#2b7f92]" />}
            </div>
          </div>
        ))}
      </div>
      <div className="flex-1" />
      <Slot w="w-[34px]"><svg width="11" height="7" viewBox="0 0 11 7" fill="none" stroke="#222" strokeWidth="1.400"><path d="M.7 6l4.800-4.800L10.300 6" /></svg></Slot>
      <Slot w="w-[34px]"><CloudOff /></Slot>
      <div className="w-[46px] text-center leading-[16.700px] tracking-[-0.1px]">ENG<br />IN</div>
      <div className="flex w-[80px] items-center justify-center gap-[8px] pl-[4px]"><Wifi /><Volume /><Battery /></div>
      <div className="w-[76px] text-right leading-[16.700px] tracking-[-0.05px]">20:50<br />15-06-2024</div>
      <Slot w="w-[33px]"><Bell /></Slot>
      <div className="mr-[20px] ml-[8px]"><CopilotPre /></div>
    </div>
  );
}

export default function App() {
  return (
    <div className="flex h-[900px] w-[1600px] flex-col overflow-hidden bg-[#f7f7f7] font-['Open_Sans','Noto_Sans',sans-serif] text-[#1b1b1b] [&_svg]:shrink-0">
      <TabStrip />
      <Toolbar />
      <div className="flex flex-1">
        <div className="w-[1555px] shrink-0">
          <Bookmarks />
          <Dashboard />
        </div>
        <Sidebar />
      </div>
      <Taskbar />
    </div>
  );
}
